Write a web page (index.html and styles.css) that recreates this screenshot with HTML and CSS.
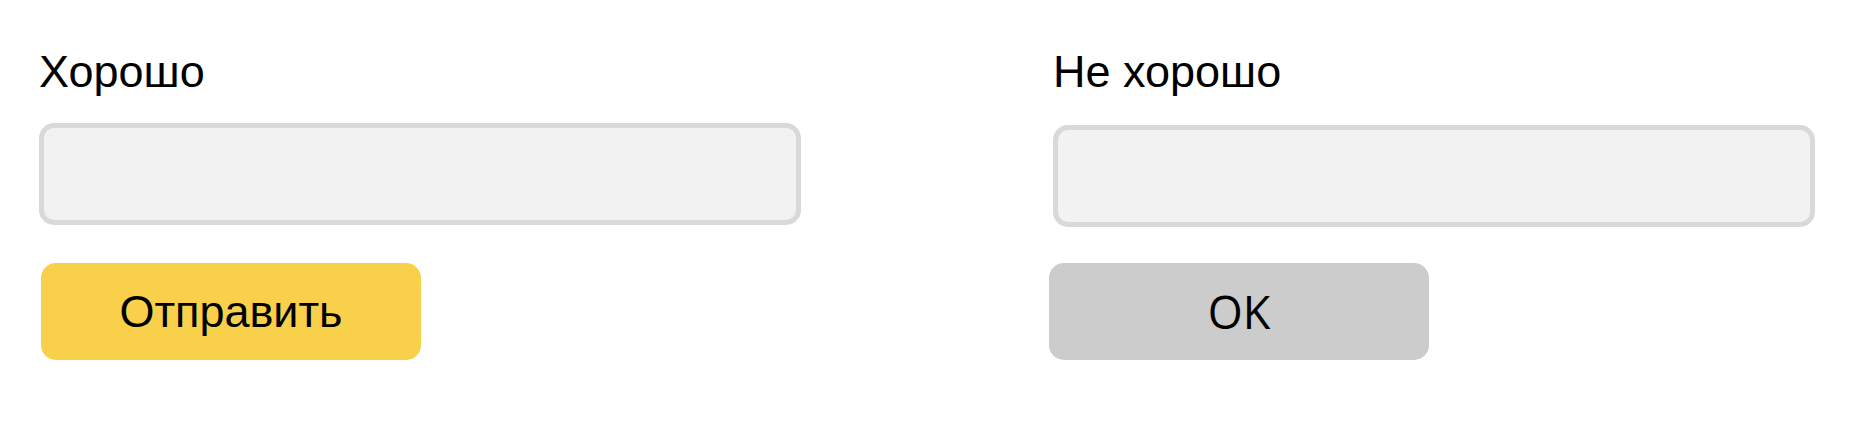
FILE: index.html
```html
<!DOCTYPE html>
<html lang="ru">
<head>
<meta charset="utf-8">
<title>Хорошо / Не хорошо</title>
<link rel="stylesheet" href="styles.css">
</head>
<body>
<div class="page">
  <section class="col">
    <div class="label">Хорошо</div>
    <div class="field"></div>
    <button class="btn btn-primary">Отправить</button>
  </section>
  <section class="col col-right">
    <div class="label">Не хорошо</div>
    <div class="field"></div>
    <button class="btn btn-grey">OK</button>
  </section>
</div>
</body>
</html>
```
FILE: styles.css
```css
html, body {
  margin: 0;
  padding: 0;
  background: #ffffff;
}
.page {
  display: flex;
  gap: 252px;
  padding-left: 39px;
  font-family: "Liberation Sans", Arial, sans-serif;
  color: #000;
}
.col {
  width: 762px;
  display: flex;
  flex-direction: column;
  align-items: flex-start;
}
.label {
  margin-top: 46px;
  font-size: 45px;
  line-height: 52px;
}
.field {
  margin-top: 25px;
  width: 100%;
  height: 102px;
  box-sizing: border-box;
  border: 5px solid #d9d9d9;
  background: #f2f2f2;
  border-radius: 15px;
}
.col-right .field {
  margin-top: 27px;
}
.btn {
  margin-top: 38px;
  margin-left: 2px;
  width: 380px;
  height: 97px;
  border: none;
  border-radius: 15px;
  padding: 0;
  font-size: 45px;
  font-family: "Liberation Sans", Arial, sans-serif;
  color: #000;
  display: flex;
  align-items: center;
  justify-content: center;
}
.btn-primary {
  background: #f9d04a;
}
.btn-grey {
  margin-top: 36px;
  margin-left: -4px;
  background: #cccccc;
  font-family: "Open Sans", sans-serif;
}
```
